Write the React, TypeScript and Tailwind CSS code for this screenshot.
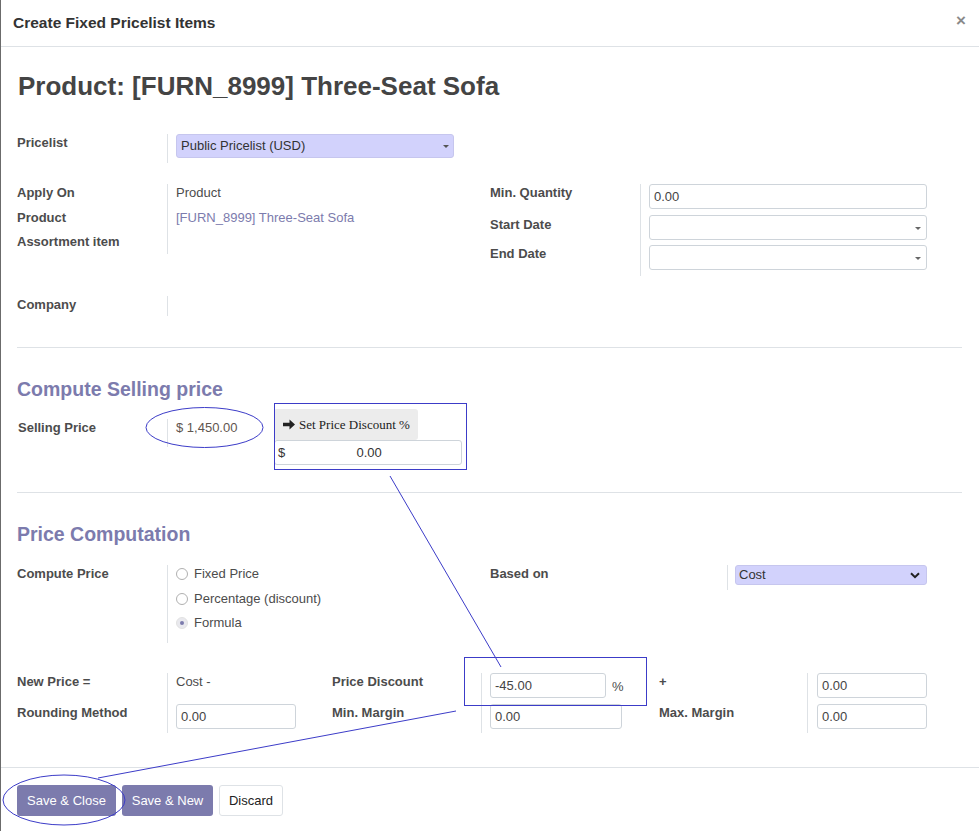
import React from 'react';

const FONT = { fontFamily: '"Liberation Sans", Arial, sans-serif' };

const Label: React.FC<{ text: string; w?: string }> = ({ text, w = 'w-[150px]' }) => (
  <div className={`${w} shrink-0 font-bold text-[13px] leading-[18px] text-[#4c4c4c]`}>{text}</div>
);

const Input: React.FC<{ value?: string; w: string; caret?: boolean }> = ({ value = '', w, caret }) => (
  <div
    className={`${w} h-[25px] relative border border-[#ced4da] rounded-[3px] bg-white px-[4px] flex items-center text-[13px] text-[#444]`}
  >
    {value}
    {caret && (
      <span className="absolute right-[5px] top-[11px] w-0 h-0 border-l-[3px] border-r-[3px] border-t-[3px] border-l-transparent border-r-transparent border-t-[#666]" />
    )}
  </div>
);

const Radio: React.FC<{ label: string; checked?: boolean }> = ({ label, checked }) => (
  <div className="h-[24.5px] flex items-start">
    <div className="mt-[3px] flex items-center">
      <span
        className={`w-[12px] h-[12px] rounded-full border flex items-center justify-center ${
          checked ? 'border-[#e2e2e2] bg-[#e9e9ee]' : 'border-[#b0b0b0] bg-white'
        }`}
      >
        {checked && <span className="w-[4px] h-[4px] rounded-full bg-[#7c7bad]" />}
      </span>
      <span className="ml-[6px] text-[13px] leading-[12px] text-[#4c4c4c]">{label}</span>
    </div>
  </div>
);

export default function App() {
  return (
    <div
      className="relative w-full h-[831px] overflow-hidden bg-white border-l border-[#6b6b6b] text-[#444]"
      style={FONT}
    >
      {/* header */}
      <div className="h-[47px] border-b border-[#dee2e6] flex items-center justify-between pl-[12px] pr-[13px]">
        <div className="text-[15.5px] font-bold text-[#333]">Create Fixed Pricelist Items</div>
        <div className="text-[17px] font-bold text-[#8a8a8a] leading-none -mt-[5px]">×</div>
      </div>

      <div className="pl-[16px] pr-[17px] pt-[24px]">
        <h1 className="text-[26px] leading-[30px] font-bold text-[#444] pl-[1px]">Product: [FURN_8999] Three-Seat Sofa</h1>

        {/* pricelist */}
        <div className="mt-[33px] flex h-[29px]">
          <Label text="Pricelist" />
          <div className="border-l border-[#dee2e6] pl-[8px]">
            <div className="w-[278px] h-[24px] relative rounded-[3px] bg-[#d2d2fc] border border-[#c6c6ee] px-[4px] flex items-center text-[13px] text-[#333]">
              Public Pricelist (USD)
              <span className="absolute right-[4px] top-[10px] w-0 h-0 border-l-[3px] border-r-[3px] border-t-[3px] border-l-transparent border-r-transparent border-t-[#555]" />
            </div>
          </div>
        </div>

        {/* apply on / quantity */}
        <div className="mt-[21px] flex">
          <div className="w-[464px] flex">
            <div className="w-[150px]">
              <div className="h-[24.5px]"><Label text="Apply On" /></div>
              <div className="h-[24.5px]"><Label text="Product" /></div>
              <div className="h-[24px]"><Label text="Assortment item" /></div>
            </div>
            <div className="border-l border-[#dee2e6] pl-[8px] h-[70px] text-[13px] leading-[18px]">
              <div className="h-[24.5px] text-[#4c4c4c]">Product</div>
              <div className="h-[24.5px] text-[#7c7bad]">[FURN_8999] Three-Seat Sofa</div>
            </div>
          </div>
          <div className="ml-[9px] flex">
            <div className="w-[150px]">
              <div className="h-[30.5px]"><Label text="Min. Quantity" /></div>
              <div className="h-[30.5px] pt-[1px]"><Label text="Start Date" /></div>
              <div className="h-[30.5px]"><Label text="End Date" /></div>
            </div>
            <div className="border-l border-[#dee2e6] pl-[8px]">
              <div className="h-[30.5px]"><Input w="w-[278px]" value="0.00" /></div>
              <div className="h-[30.5px] pt-[0.5px]"><Input w="w-[278px]" caret /></div>
              <div className="h-[30.5px]"><Input w="w-[278px]" caret /></div>
            </div>
          </div>
        </div>

        {/* company */}
        <div className="mt-[20.5px] flex h-[20px]">
          <Label text="Company" />
          <div className="border-l border-[#dee2e6]" />
        </div>

        <div className="mt-[31px] border-t border-[#dee2e6]" />

        <h2 className="mt-[29px] text-[19.5px] leading-[24px] font-bold text-[#7c7bad]">Compute Selling price</h2>

        <div className="mt-[18px] flex h-[28px]">
          <div className="w-[150px] shrink-0 pl-[1px] font-bold text-[13px] leading-[18px] text-[#4c4c4c]">Selling Price</div>
          <div className="border-l border-[#dee2e6] pl-[8px] flex items-start">
            <div className="w-[98px] shrink-0 text-[13px] leading-[18px] text-[#5f5650]">$ 1,450.00</div>
            <div className="-mt-[10px] w-[188px]">
              <div
                className="w-[144px] h-[31px] bg-[#ececec] rounded-[3px] flex items-center pl-[9px] text-[13px] text-[#222]"
                style={{ fontFamily: '"Liberation Serif", "Times New Roman", serif' }}
              >
                <svg width="12" height="11" viewBox="0 0 12 11" className="mr-[4px]">
                  <path d="M0 3.8h6.5V0.5L12 5.5 6.5 10.5V7.2H0z" fill="#222" />
                </svg>
                Set Price Discount %
              </div>
              <div className="h-[25px] border border-[#ced4da] rounded-[3px] flex items-center px-[3px] text-[13px] text-[#333]">
                <span>$</span>
                <span className="flex-1 text-center pr-[5px]">0.00</span>
              </div>
            </div>
          </div>
        </div>

        <div className="mt-[45px] border-t border-[#dee2e6]" />

        <h2 className="mt-[29px] text-[19.5px] leading-[24px] font-bold text-[#7c7bad]">Price Computation</h2>

        <div className="mt-[19px] flex">
          <div className="w-[473px] flex">
            <Label text="Compute Price" />
            <div className="border-l border-[#dee2e6] pl-[8px] h-[78px]">
              <Radio label="Fixed Price" />
              <Radio label="Percentage (discount)" />
              <Radio label="Formula" checked />
            </div>
          </div>
          <div className="flex">
            <Label text="Based on" w="w-[237px]" />
            <div className="border-l border-[#dee2e6] pl-[7px] h-[25px]">
              <div className="w-[192px] h-[20px] relative rounded-[3px] bg-[#d2d2fc] border border-[#c6c6ee] px-[3px] flex items-center text-[13px] text-[#333]">
                Cost
                <svg width="10" height="7" viewBox="0 0 10 7" className="absolute right-[6px] top-[6px]">
                  <path d="M1 1.2l4 4 4-4" fill="none" stroke="#222" strokeWidth="2" />
                </svg>
              </div>
            </div>
          </div>
        </div>

        {/* formula rows */}
        <div className="mt-[30px] flex">
          <div className="w-[150px]">
            <div className="h-[31px]"><Label text="New Price =" /></div>
            <div className="h-[29px]"><Label text="Rounding Method" /></div>
          </div>
          <div className="w-[165px] border-l border-[#dee2e6] pl-[8px]">
            <div className="h-[31px] text-[13px] leading-[18px] text-[#4c4c4c]">Cost -</div>
            <div className="h-[29px]"><Input w="w-[120px]" value="0.00" /></div>
          </div>
          <div className="w-[149px]">
            <div className="h-[31px]"><Label text="Price Discount" /></div>
            <div className="h-[29px]"><Label text="Min. Margin" /></div>
          </div>
          <div className="w-[178px] border-l border-[#dee2e6] pl-[8px]">
            <div className="h-[31px] flex items-start">
              <Input w="w-[116px]" value="-45.00" />
              <span className="ml-[6px] mt-[4px] text-[13px] text-[#4c4c4c]">%</span>
            </div>
            <div className="h-[29px]"><Input w="w-[132px]" value="0.00" /></div>
          </div>
          <div className="w-[148px]">
            <div className="h-[31px]"><Label text="+" /></div>
            <div className="h-[29px]"><Label text="Max. Margin" /></div>
          </div>
          <div className="border-l border-[#dee2e6] pl-[9px]">
            <div className="h-[31px]"><Input w="w-[110px]" value="0.00" /></div>
            <div className="h-[29px]"><Input w="w-[110px]" value="0.00" /></div>
          </div>
        </div>
      </div>

      {/* footer */}
      <div className="mt-[34px] border-t border-[#dee2e6] pt-[17px] pl-[16px] pr-[17px] flex gap-[6px] text-[13px]">
        <button className="h-[31px] w-[99px] rounded-[3px] bg-[#7c7bad] text-white">Save &amp; Close</button>
        <button className="h-[31px] w-[91px] rounded-[3px] bg-[#7c7bad] text-white">Save &amp; New</button>
        <button className="h-[31px] w-[64px] rounded-[3px] bg-white border border-[#dee2e6] text-[#222]">Discard</button>
      </div>

      {/* annotations */}
      <svg className="absolute inset-0 pointer-events-none" width="979" height="831">
        <g fill="none" stroke="#3c3cc8" strokeWidth="1">
          <ellipse cx="203.5" cy="427.5" rx="58.5" ry="20" />
          <rect x="273.5" y="403.5" width="192" height="66" />
          <line x1="389" y1="476" x2="500" y2="667" />
          <rect x="463.5" y="657.5" width="182" height="48" />
          <line x1="455" y1="711" x2="97" y2="778" />
          <ellipse cx="63" cy="800" rx="61" ry="25" />
        </g>
      </svg>
    </div>
  );
}
